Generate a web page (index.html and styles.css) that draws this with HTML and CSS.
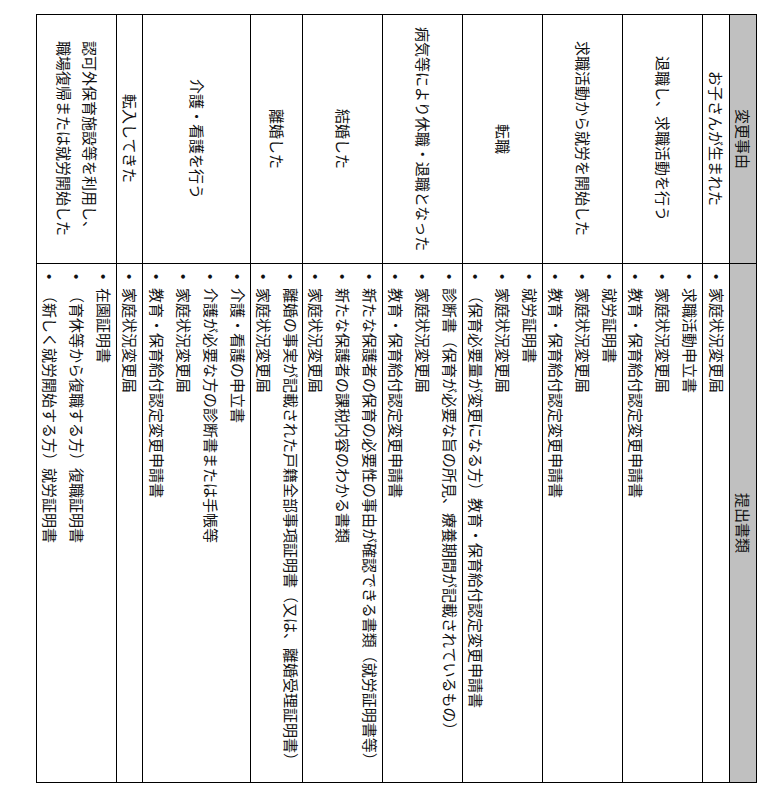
FILE: index.html
```html
<!DOCTYPE html>
<html lang="ja">
<head>
<meta charset="utf-8">
<title>変更事由と提出書類</title>
<link rel="stylesheet" href="styles.css">
</head>
<body>
<div class="page">
  <div class="sheet" role="table">
    <div class="cell head" role="columnheader">変更事由</div>
    <div class="cell head" role="columnheader">提出書類</div>

    <div class="cell reason">お子さんが生まれた</div>
    <div class="cell docs"><ul class="list">
      <li>家庭状況変更届</li>
    </ul></div>

    <div class="cell reason">退職し、求職活動を行う</div>
    <div class="cell docs"><ul class="list">
      <li>求職活動申立書</li>
      <li>家庭状況変更届</li>
      <li>教育・保育給付認定変更申請書</li>
    </ul></div>

    <div class="cell reason">求職活動から就労を開始した</div>
    <div class="cell docs"><ul class="list">
      <li>就労証明書</li>
      <li>家庭状況変更届</li>
      <li>教育・保育給付認定変更申請書</li>
    </ul></div>

    <div class="cell reason">転職</div>
    <div class="cell docs"><ul class="list">
      <li>就労証明書</li>
      <li>家庭状況変更届</li>
      <li>（保育必要量が変更になる方）教育・保育給付認定変更申請書</li>
    </ul></div>

    <div class="cell reason">病気等により休職・退職となった</div>
    <div class="cell docs"><ul class="list">
      <li>診断書（保育が必要な旨の所見、療養期間が記載されているもの）</li>
      <li>家庭状況変更届</li>
      <li>教育・保育給付認定変更申請書</li>
    </ul></div>

    <div class="cell reason">結婚した</div>
    <div class="cell docs"><ul class="list">
      <li>新たな保護者の保育の必要性の事由が確認できる書類（就労証明書等）</li>
      <li>新たな保護者の課税内容のわかる書類</li>
      <li>家庭状況変更届</li>
    </ul></div>

    <div class="cell reason">離婚した</div>
    <div class="cell docs"><ul class="list">
      <li>離婚の事実が記載された戸籍全部事項証明書（又は、離婚受理証明書）</li>
      <li>家庭状況変更届</li>
    </ul></div>

    <div class="cell reason">介護・看護を行う</div>
    <div class="cell docs"><ul class="list">
      <li>介護・看護の申立書</li>
      <li>介護が必要な方の診断書または手帳等</li>
      <li>家庭状況変更届</li>
      <li>教育・保育給付認定変更申請書</li>
    </ul></div>

    <div class="cell reason">転入してきた</div>
    <div class="cell docs"><ul class="list">
      <li>家庭状況変更届</li>
    </ul></div>

    <div class="cell reason">認可外保育施設等を利用し、<br>職場復帰または就労開始した</div>
    <div class="cell docs"><ul class="list">
      <li>在園証明書</li>
      <li>（育休等から復職する方）復職証明書</li>
      <li>（新しく就労開始する方）就労証明書</li>
    </ul></div>
  </div>
</div>
</body>
</html>
```

FILE: styles.css
```css
html, body {
  margin: 0;
  padding: 0;
  background: #fff;
}

.page {
  display: flex;
  justify-content: flex-end;
  align-items: flex-start;
  padding: 14px 16px 0 0;
}

.sheet {
  writing-mode: vertical-rl;
  text-orientation: sideways;
  display: grid;
  grid-template-columns: 248px 518px;
  grid-template-rows: 26px 26px 79px 79px 79px 79px 79px 51px 107px 25px 79px;
  gap: 1px;
  padding: 1px;
  background: #000;
  font-family: "Noto Sans CJK JP", "Noto Sans", sans-serif;
  font-size: 15px;
  line-height: 26px;
  color: #111;
}

.cell {
  background: #fff;
  display: flex;
  flex-direction: column;
  justify-content: center;
  overflow: hidden;
}

.head {
  background: #c0c0c0;
  align-items: center;
  text-align: center;
}

.reason {
  align-items: center;
  text-align: center;
}

.docs {
  align-items: stretch;
}

.list {
  margin: 0;
  padding: 0;
  list-style: none;
}

.list li {
  white-space: nowrap;
}

.list li::before {
  content: "•";
  display: inline-block;
  box-sizing: border-box;
  inline-size: 24px;
  padding-inline-start: 10px;
  font-family: "Liberation Sans", sans-serif;
}
```
